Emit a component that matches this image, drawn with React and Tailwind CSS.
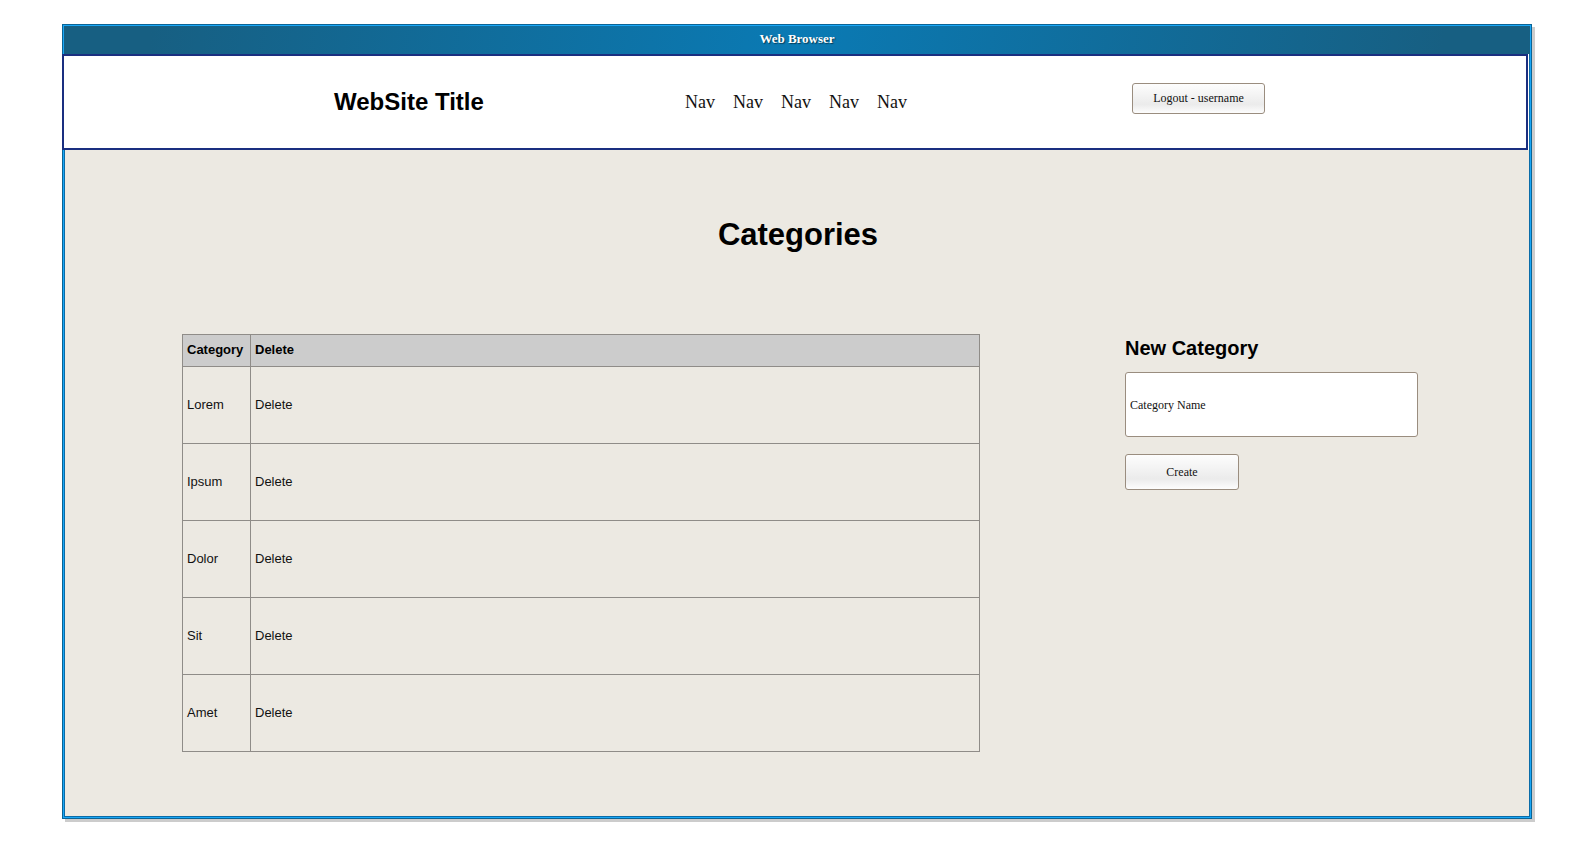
const categories = ["Lorem", "Ipsum", "Dolor", "Sit", "Amet"];
const navItems = ["one", "two", "three", "four", "five"];

function Button({ className, children }) {
  return (
    <button
      type="button"
      className={`rounded-[3px] border border-[#9a8d7f] bg-[linear-gradient(to_bottom,#fdfdfd_0%,#f3f3f3_40%,#ebebeb_70%,#fdfdfd_100%)] font-['Liberation_Serif',serif] text-xs text-[#111111] ${className}`}
    >
      {children}
    </button>
  );
}

export default function App() {
  return (
    <div className="bg-white pt-6 pr-[50px] pb-[38px] pl-[62px] font-['Liberation_Sans',sans-serif] text-black">
      <div className="border border-[#0a6496] shadow-[3px_3px_0_#cccccc]">
        <div className="border border-[#1aa7f7]">
          <div className="flex h-7 items-center justify-center bg-[linear-gradient(100deg,#175f82_6%,#0a7ab4_50%,#175f82_94%)] pb-0.5 font-['Liberation_Serif',serif] text-[13px] font-bold text-white [text-shadow:1px_1px_1px_#00000080]">
            Web Browser
          </div>
          <div className="border-x border-b border-[#0a6ca8] bg-[#ece9e2]">
            <div className="bg-white">
              <header className="mr-px -ml-[3px] flex h-24 items-center border-2 border-[#1a2f80] bg-white pl-[270px]">
                <div className="w-[351px] text-2xl font-bold">WebSite Title</div>
                <nav className="flex w-[447px] gap-[18px] font-['Liberation_Serif',serif] text-lg text-[#111111]">
                  {navItems.map((item) => (
                    <a key={item} href={`#${item}`}>
                      Nav
                    </a>
                  ))}
                </nav>
                <Button className="mb-2 h-[31px] w-[133px]">Logout - username</Button>
              </header>
            </div>
            <main className="pt-[65px] pr-[111px] pb-16 pl-[117px]">
              <h1 className="pr-1 text-center text-[31px] leading-10 font-bold">Categories</h1>
              <div className="mt-[79px] flex items-start gap-[145px]">
                <table className="min-w-0 flex-1 border-collapse text-left text-[13px]">
                  <thead>
                    <tr className="h-8 bg-[#cccccc]">
                      <th className="w-[68px] border border-[#8f8c88] px-1 pb-0.5">Category</th>
                      <th className="border border-[#8f8c88] px-1 pb-0.5">Delete</th>
                    </tr>
                  </thead>
                  <tbody className="text-[#111111]">
                    {categories.map((name) => (
                      <tr key={name} className="h-[77px]">
                        <td className="border border-[#8f8c88] px-1">{name}</td>
                        <td className="border border-[#8f8c88] px-1">
                          <button type="button">Delete</button>
                        </td>
                      </tr>
                    ))}
                  </tbody>
                </table>
                <form className="flex w-[293px] flex-col items-start">
                  <h2 className="text-xl leading-7 font-bold">
                    <label htmlFor="category-name">New Category</label>
                  </h2>
                  <input
                    id="category-name"
                    type="text"
                    defaultValue="Category Name"
                    className="mt-2.5 h-[65px] w-full rounded-[3px] border border-[#9a8d7f] bg-white px-1 pt-0.5 font-['Liberation_Serif',serif] text-xs text-[#111111]"
                  />
                  <Button className="mt-[17px] h-9 w-[114px]">Create</Button>
                </form>
              </div>
            </main>
          </div>
        </div>
      </div>
    </div>
  );
}
